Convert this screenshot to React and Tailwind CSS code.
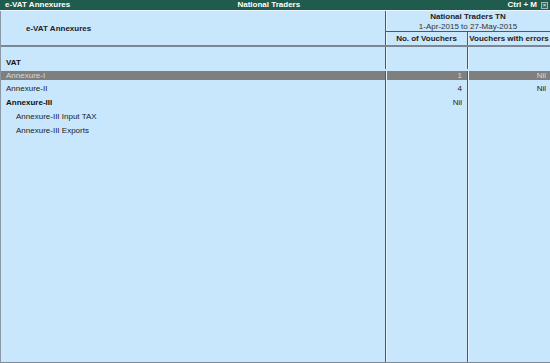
export default function App() {
  const font = { fontFamily: '"Liberation Sans", Arial, sans-serif' };
  const rows = [
    { label: "VAT", bold: true, h: "h-[13px]" },
    { label: "Annexure-I", sel: true, c1: "1", c2: "Nil", h: "h-[13px]" },
    { label: "Annexure-II", c1: "4", c2: "Nil", h: "h-[14px]" },
    { label: "Annexure-III", bold: true, c1: "Nil", h: "h-[14px]" },
    { label: "Annexure-III Input TAX", indent: true, h: "h-[14px]" },
    { label: "Annexure-III Exports", indent: true, h: "h-[14px]" },
  ];
  const colL = "border-l border-l-[#4d5a66] shadow-[inset_1px_0_0_#e6f3ff]";
  return (
    <div style={font} className="w-[550px] h-[363px] flex flex-col bg-[#c8e6fc] text-[8px] leading-none text-[#222] overflow-hidden">
      {/* title bar */}
      <div className="h-[10px] bg-[#1f5c4e] text-white font-bold flex items-center pl-[5px] pr-[2px]">
        <span>e-VAT Annexures</span>
        <span className="flex-1 text-center pr-[40px]">National Traders</span>
        <span className="mr-[4px]">Ctrl + M</span>
        <span className="w-[7px] h-[7px] border border-[#9bb] bg-[#2d6a5c] flex items-center justify-center text-[6px] leading-none text-[#dde]">×</span>
      </div>
      <div className="h-[1px] bg-[#e8f4ff]" />
      <div className="flex-1 flex flex-col border-l border-l-[#8a98a6] border-b border-b-[#7d8a96]">
        {/* header */}
        <div className="h-[36px] flex border-b-2 border-b-[#7b8894]">
          <div className="flex-1 flex items-center pl-[25px] pt-[1px] font-bold">e-VAT Annexures</div>
          <div className={`w-[165px] flex flex-col ${colL}`}>
            <div className="h-[20px] flex flex-col items-center pt-[1px]">
              <div className="font-bold h-[10px] flex items-center">National Traders TN</div>
              <div className="h-[9px] flex items-center text-[#333]">1-Apr-2015 to 27-May-2015</div>
            </div>
            <div className="flex-1 flex border-t border-t-[#4d5a66] font-bold">
              <div className="w-[81px] flex items-center justify-center">No. of Vouchers</div>
              <div className={`flex-1 flex items-center justify-center ${colL}`}>Vouchers with errors</div>
            </div>
          </div>
        </div>
        {/* body */}
        <div className="flex-1 flex flex-col">
          <div className="h-[9px] flex">
            <div className="flex-1" />
            <div className={`w-[82px] ${colL}`} />
            <div className={`w-[83px] ${colL}`} />
          </div>
          {rows.map((r) => (
            <div key={r.label} className={`${r.h} flex flex-col`}>
              <div className={`${r.sel ? "mt-[2px] h-[9px] bg-[#7f7f7f] text-[#d8d8d8]" : "flex-1"} flex`}>
                <div className={`flex-1 flex items-center ${r.indent ? "pl-[15px]" : "pl-[5px]"} ${r.bold ? "font-bold text-[#111]" : ""}`}>{r.label}</div>
                <div className={`w-[82px] flex items-center justify-end pr-[5px] ${colL}`}>{r.c1}</div>
                <div className={`w-[83px] flex items-center justify-end pr-[4px] ${colL}`}>{r.c2}</div>
              </div>
              {r.sel && <div className="flex-1 flex"><div className="flex-1" /><div className={`w-[82px] ${colL}`} /><div className={`w-[83px] ${colL}`} /></div>}
            </div>
          ))}
          <div className="flex-1 flex">
            <div className="flex-1" />
            <div className={`w-[82px] ${colL}`} />
            <div className={`w-[83px] ${colL}`} />
          </div>
        </div>
      </div>
    </div>
  );
}
